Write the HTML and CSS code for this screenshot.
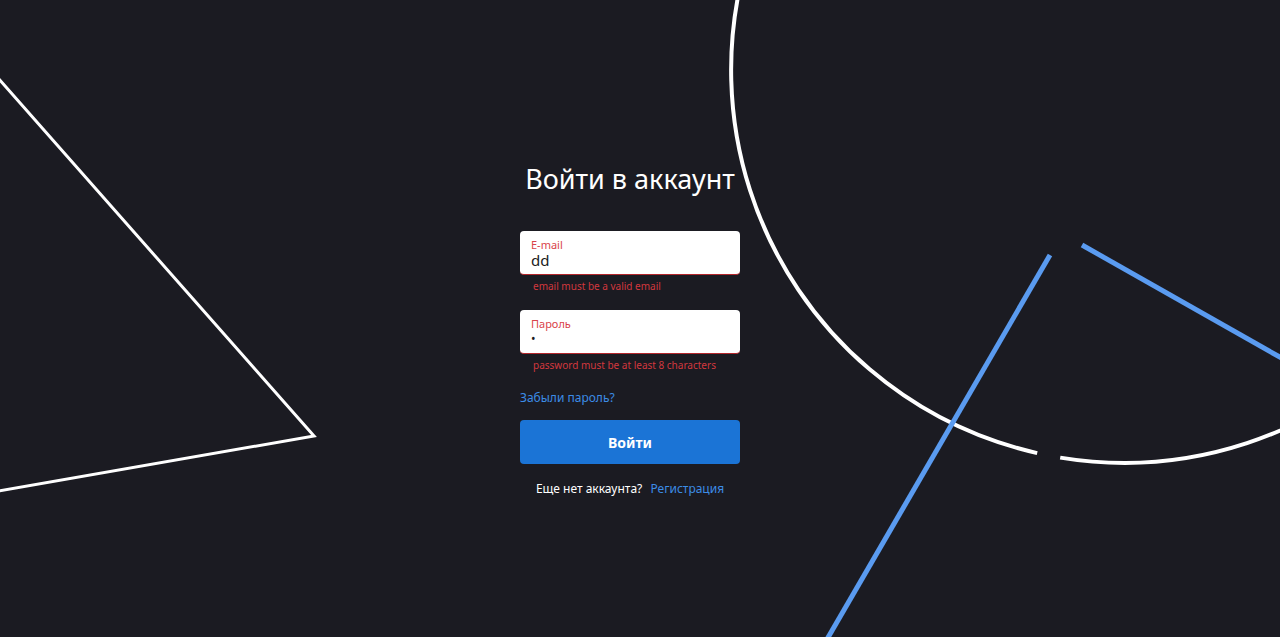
FILE: index.html
```html
<!DOCTYPE html>
<html lang="ru">
<head>
<meta charset="utf-8">
<title>Войти в аккаунт</title>
<link rel="stylesheet" href="styles.css">
</head>
<body>
<svg class="bg" viewBox="0 0 1280 637" preserveAspectRatio="none" aria-hidden="true">
  <polyline points="-2,78 314,436 -2,491" fill="none" stroke="#ffffff" stroke-width="3" stroke-linejoin="miter"/>
  <path d="M1037.2 453.1 A393 393 0 1 1 1060.2 457.6" fill="none" stroke="#ffffff" stroke-width="4"/>
  <line x1="1050" y1="255" x2="826" y2="641" stroke="#5a9bf0" stroke-width="5"/>
  <line x1="1082" y1="245" x2="1292" y2="364" stroke="#5a9bf0" stroke-width="5"/>
</svg>
<main class="page">
  <form class="form">
    <h1 class="title">Войти в аккаунт</h1>
    <div class="field">
      <label class="label">E-mail</label>
      <div class="value">dd</div>
    </div>
    <div class="error">email must be a valid email</div>
    <div class="field">
      <label class="label">Пароль</label>
      <div class="value dot">•</div>
    </div>
    <div class="error">password must be at least 8 characters</div>
    <a class="forgot" href="#">Забыли пароль?</a>
    <button class="submit" type="button">Войти</button>
    <p class="signup">Еще нет аккаунта? <a href="#">Регистрация</a></p>
  </form>
</main>
</body>
</html>
```
FILE: styles.css
```css
html, body {
  margin: 0;
  height: 100%;
  background: #1b1b22;
  overflow: hidden;
}
body {
  font-family: "Noto Sans", "Open Sans", sans-serif;
  position: relative;
}
.bg {
  position: absolute;
  left: 0;
  top: 0;
  width: 1280px;
  height: 637px;
}
.page {
  position: relative;
  display: flex;
  justify-content: center;
  padding-right: 20px;
  padding-top: 162px;
}
.form {
  width: 220px;
  display: flex;
  flex-direction: column;
}
.title {
  margin: 0 0 35px;
  font-size: 27px;
  line-height: 34px;
  font-weight: 400;
  color: #ffffff;
  text-align: center;
  white-space: nowrap;
}
.field {
  height: 44px;
  box-sizing: border-box;
  background: #ffffff;
  border-radius: 4px;
  border-bottom: 1px solid #b3262b;
  padding: 7px 11px 0;
  display: flex;
  flex-direction: column;
}
.label {
  font-size: 11px;
  line-height: 13px;
  color: #d9434a;
}
.value {
  font-size: 15px;
  line-height: 18px;
  color: #1b1b22;
}
.dot {
  font-size: 12px;
}
.error {
  font-size: 10px;
  line-height: 16px;
  color: #d2383e;
  padding: 3px 0 0 13px;
  height: 35px;
  box-sizing: border-box;
}
.forgot {
  margin-top: 0;
  font-size: 12px;
  line-height: 18px;
  color: #3c8ce6;
  text-decoration: none;
}
.submit {
  margin-top: 13px;
  height: 44px;
  border: 0;
  border-radius: 4px;
  background: #1b74d6;
  color: #ffffff;
  font-family: inherit;
  font-size: 14px;
  font-weight: 700;
}
.signup {
  margin: 16px 0 0;
  font-size: 12px;
  line-height: 18px;
  color: #ffffff;
  text-align: center;
}
.signup a {
  margin-left: 5px;
  color: #3c8ce6;
  text-decoration: none;
}
```
